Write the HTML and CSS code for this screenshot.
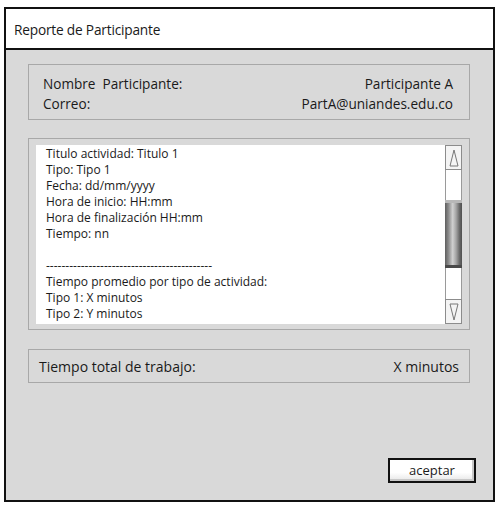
FILE: index.html
```html
<!DOCTYPE html>
<html lang="es">
<head>
<meta charset="utf-8">
<title>Reporte de Participante</title>
<link rel="stylesheet" href="styles.css">
</head>
<body>
<div class="window">
  <div class="titlebar">Reporte de Participante</div>
  <div class="content">
    <div class="box info">
      <div class="row"><span>Nombre&nbsp; Participante:</span><span>Participante A</span></div>
      <div class="row"><span>Correo:</span><span>PartA@uniandes.edu.co</span></div>
    </div>
    <div class="box listbox">
      <div class="list">
        <div class="line">Titulo actividad: Titulo 1</div>
        <div class="line">Tipo: Tipo 1</div>
        <div class="line">Fecha: dd/mm/yyyy</div>
        <div class="line">Hora de inicio: HH:mm</div>
        <div class="line">Hora de finalización HH:mm</div>
        <div class="line">Tiempo: nn</div>
        <div class="line">&nbsp;</div>
        <div class="line">-------------------------------------------</div>
        <div class="line">Tiempo promedio por tipo de actividad:</div>
        <div class="line">Tipo 1: X minutos</div>
        <div class="line">Tipo 2: Y minutos</div>
      </div>
      <div class="scrollbar">
        <div class="sb-btn">
          <svg width="10" height="18" viewBox="0 0 10 18"><polygon points="5,1 9,17 1,17" fill="none" stroke="#777" stroke-width="1"/></svg>
        </div>
        <div class="sb-track">
          <div class="sb-gap-top"></div>
          <div class="sb-thumb"></div>
        </div>
        <div class="sb-btn">
          <svg width="10" height="18" viewBox="0 0 10 18"><polygon points="1,1 9,1 5,17" fill="none" stroke="#777" stroke-width="1"/></svg>
        </div>
      </div>
    </div>
    <div class="box total">
      <span>Tiempo total de trabajo:</span><span>X minutos</span>
    </div>
    <div class="actions">
      <button class="btn">aceptar</button>
    </div>
  </div>
</div>
</body>
</html>
```

FILE: styles.css
```css
html, body {
  margin: 0;
  padding: 0;
  background: #ffffff;
}

body {
  font-family: "Open Sans", "Noto Sans", sans-serif;
  color: #1a1a1a;
}

.window {
  margin: 7px 0 0 4px;
  width: 491px;
  height: 495px;
  box-sizing: border-box;
  border: 2px solid #111;
  display: flex;
  flex-direction: column;
  background: #d9d9d9;
}

.titlebar {
  height: 41px;
  box-sizing: border-box;
  background: #ffffff;
  border-bottom: 2px solid #111;
  font-size: 13.7px;
  padding: 11px 0 0 8px;
  letter-spacing: -0.2px;
}

.content {
  flex: 1;
  display: flex;
  flex-direction: column;
  padding: 14px 22px 17px 22px;
}

.box {
  border: 1px solid #a8a8a8;
  box-sizing: border-box;
  width: 442px;
}

.info {
  height: 56px;
  padding: 9px 16px 0 14px;
  font-size: 13.6px;
  line-height: 20px;
}

.row {
  display: flex;
  justify-content: space-between;
}

.listbox {
  margin-top: 18px;
  height: 192px;
  padding: 6px 7px 5px 7px;
  display: flex;
}

.list {
  flex: 1;
  background: #ffffff;
  padding: 1px 0 0 10px;
  font-size: 12px;
  line-height: 16px;
  overflow: hidden;
  white-space: nowrap;
}

.scrollbar {
  width: 17px;
  display: flex;
  flex-direction: column;
  background: #ffffff;
}

.sb-btn {
  height: 25px;
  box-sizing: border-box;
  border: 1px solid #8c8c8c;
  background: #f4f4f4;
  display: flex;
  align-items: center;
  justify-content: center;
}

.sb-track {
  flex: 1;
  border-left: 1px solid #9a9a9a;
  border-right: 1px solid #9a9a9a;
  display: flex;
  flex-direction: column;
}

.sb-gap-top {
  height: 30px;
}

.sb-thumb {
  height: 68px;
  margin: 0 -1px;
  background: linear-gradient(to right, #5e5e5e 0%, #8a8a8a 20%, #d0d0d0 45%, #a5a5a5 65%, #6a6a6a 85%, #4f4f4f 100%);
  border-top: 3px solid #b8b8b8;
  border-bottom: 3px solid #4a4a4a;
  box-sizing: border-box;
}

.total {
  margin-top: 19px;
  height: 34px;
  padding: 0 10px 0 10px;
  display: flex;
  justify-content: space-between;
  align-items: center;
  font-size: 14px;
}

.actions {
  margin-top: auto;
  display: flex;
  justify-content: flex-end;
  margin-right: -5px;
}

.btn {
  width: 88px;
  height: 25px;
  box-sizing: border-box;
  border: 2px solid #111;
  background: linear-gradient(to bottom, #ffffff 0%, #ffffff 60%, #e6e6e6 100%);
  box-shadow: inset -2px -2px 0 #c8c8c8;
  font-family: "Open Sans", "Noto Sans", sans-serif;
  font-size: 13px;
  color: #1a1a1a;
  padding: 0;
  line-height: 19px;
}
```
